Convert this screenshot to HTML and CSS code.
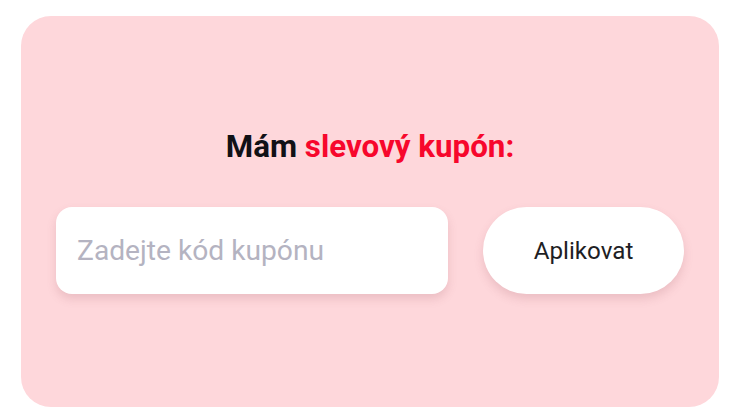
FILE: index.html
```html
<!DOCTYPE html>
<html lang="cs">
<head>
<meta charset="utf-8">
<link rel="stylesheet" href="styles.css">
</head>
<body>
<div class="page">
  <section class="coupon">
    <h2 class="coupon-title">Mám <span class="accent">slevový kupón:</span></h2>
    <form class="coupon-row" onsubmit="return false">
      <input class="coupon-input" type="text" placeholder="Zadejte kód kupónu">
      <button class="coupon-btn" type="submit">Aplikovat</button>
    </form>
  </section>
</div>
</body>
</html>
```
FILE: styles.css
```css
html, body {
  margin: 0;
  padding: 0;
  background: #ffffff;
}
body {
  font-family: Roboto, "Liberation Sans", sans-serif;
}
.page {
  padding: 16px 16px 0 21px;
}
.coupon {
  box-sizing: border-box;
  width: 698px;
  height: 391px;
  background: #fed7db;
  border-radius: 30px;
  padding: 0 35px;
  display: flex;
  flex-direction: column;
  justify-content: center;
}
.coupon-title {
  margin: 0 0 43px;
  text-align: center;
  font-size: 31.3px;
  font-weight: 700;
  color: #111116;
  line-height: 35px;
}
.accent {
  color: #f7072c;
}
.coupon-row {
  display: flex;
  gap: 35px;
  margin: 0;
}
.coupon-input {
  box-sizing: border-box;
  width: 392px;
  height: 87px;
  border: none;
  outline: none;
  border-radius: 16px;
  background: #ffffff;
  padding: 0 21px;
  font-family: Roboto, "Liberation Sans", sans-serif;
  font-size: 28.2px;
  color: #222;
  box-shadow: 0 5px 10px rgba(150, 80, 90, 0.18);
}
.coupon-input::placeholder {
  color: #b4b3c1;
}
.coupon-btn {
  box-sizing: border-box;
  width: 201px;
  height: 87px;
  border: none;
  border-radius: 44px;
  background: #ffffff;
  font-family: Roboto, "Liberation Sans", sans-serif;
  font-size: 24.2px;
  color: #1e1e24;
  box-shadow: 0 5px 10px rgba(150, 80, 90, 0.18);
  cursor: pointer;
}
```
